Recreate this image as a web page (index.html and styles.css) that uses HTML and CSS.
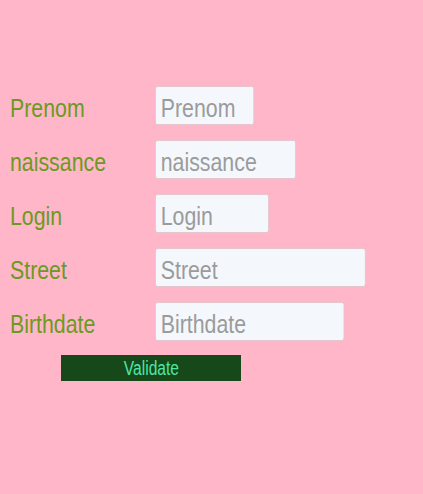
FILE: index.html
```html
<!DOCTYPE html>
<html>
<head>
<meta charset="utf-8">
<link rel="stylesheet" href="styles.css">
</head>
<body>
<form class="form">
  <div class="row">
    <label class="label"><span class="narrow">Prenom</span></label>
    <input class="field w-prenom" placeholder="Prenom">
  </div>
  <div class="row">
    <label class="label"><span class="narrow">naissance</span></label>
    <input class="field w-naissance" placeholder="naissance">
  </div>
  <div class="row">
    <label class="label"><span class="narrow">Login</span></label>
    <input class="field w-login" placeholder="Login">
  </div>
  <div class="row">
    <label class="label"><span class="narrow">Street</span></label>
    <input class="field w-street" placeholder="Street">
  </div>
  <div class="row">
    <label class="label"><span class="narrow">Birthdate</span></label>
    <input class="field w-birthdate" placeholder="Birthdate">
  </div>
  <button type="button" class="validate"><span class="btn-text">Validate</span></button>
</form>
</body>
</html>
```
FILE: styles.css
```css
html, body {
  margin: 0;
  padding: 0;
  background: #ffb6c8;
}
body {
  font-family: "Liberation Sans", Arial, sans-serif;
}
.form {
  display: flex;
  flex-direction: column;
  gap: 15px;
  padding: 86px 0 0 10px;
}
.row {
  display: flex;
  align-items: center;
  height: 39px;
}
.label {
  width: 145px;
  flex: none;
  padding-top: 6px;
  font-size: 26px;
  color: #6b9a22;
}
.narrow {
  display: inline-block;
  transform: scaleX(0.82);
  transform-origin: left center;
  white-space: nowrap;
}
.field {
  flex: none;
  box-sizing: border-box;
  height: 39px;
  margin: 0;
  padding: 6px 4px 0 6px;
  border: 1px solid #e2c4cc;
  border-radius: 3px;
  background: #f4f8fd;
  font-family: inherit;
  font-size: 26px;
  color: #333;
  outline: none;
  transform: scaleX(0.82);
  transform-origin: left center;
}
.field::placeholder {
  color: #9b9b9b;
}
.w-prenom { width: 121px; }
.w-naissance { width: 172px; }
.w-login { width: 139px; }
.w-street { width: 257px; }
.w-birthdate { width: 231px; }
.validate {
  align-self: flex-start;
  margin: -1px 0 0 51px;
  width: 180px;
  height: 26px;
  padding: 0;
  border: none;
  border-radius: 0;
  background: #17481a;
  color: #4de6a4;
  font-family: inherit;
  font-size: 20px;
}
.btn-text {
  display: inline-block;
  transform: scaleX(0.78);
  transform-origin: center;
  white-space: nowrap;
}
```
